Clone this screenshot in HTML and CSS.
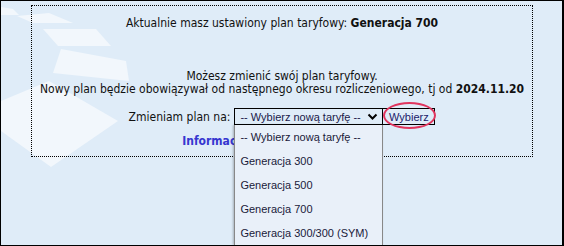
FILE: index.html
```html
<!DOCTYPE html>
<html lang="pl">
<head>
<meta charset="utf-8">
<link rel="stylesheet" href="styles.css">
</head>
<body>
<div class="frame">
  <svg class="deco" width="140" height="180" viewBox="0 0 140 180">
    <polygon points="0,6 12,8 18,14 0,14" fill="#f2f7fc"/>
    <polygon points="16,15 48,12 72,22 32,22" fill="#f2f7fc"/>
    <polygon points="42,28 95,28 110,45 57,45" fill="#f2f7fc"/>
    <polygon points="60,48 125,60 128,80 52,72" fill="#f2f7fc"/>
    <polygon points="0,100 48,80 117,120 50,166 0,130" fill="#f2f7fc"/>
  </svg>
  <div class="box">
    <p class="current">Aktualnie masz ustawiony plan taryfowy: <b>Generacja 700</b></p>
    <p class="info">Możesz zmienić swój plan taryfowy.<br>Nowy plan będzie obowiązywał od następnego okresu rozliczeniowego, tj od <b>2024.11.20</b></p>
    <div class="form-row">
      <span class="label">Zmieniam plan na:</span>
      <div class="select-wrap">
        <div class="select">
          <span>-- Wybierz nową taryfę --</span>
          <svg class="chev" width="11" height="8" viewBox="0 0 11 8"><path d="M1.5 1.5 L5.5 5.5 L9.5 1.5" fill="none" stroke="#000" stroke-width="2"/></svg>
        </div>
        <ul class="dropdown">
          <li>-- Wybierz nową taryfę --</li>
          <li>Generacja 300</li>
          <li>Generacja 500</li>
          <li>Generacja 700</li>
          <li>Generacja 300/300 (SYM)</li>
        </ul>
      </div>
      <div class="btn-wrap">
        <button class="btn">Wybierz</button>
        <span class="ring"></span>
      </div>
    </div>
    <a class="link" href="#">Informacje o planach taryfowych</a>
  </div>
</div>
</body>
</html>
```
FILE: styles.css
```css
html, body { margin: 0; padding: 0; }
body { background: #fff; }
.frame {
  position: relative;
  width: 564px;
  height: 246px;
  box-sizing: border-box;
  border: 1px solid #000;
  border-right-width: 2px;
  background: #dfecf8;
  overflow: hidden;
  padding: 4px 0 0 30px;
  font-family: "DejaVu Sans Condensed", "DejaVu Sans", sans-serif;
  font-size: 12px;
  color: #111;
}
.deco { position: absolute; left: 0; top: 0; }
.box {
  position: relative;
  width: 502px;
  height: 152px;
  box-sizing: border-box;
  border: 1px dotted #000;
  text-align: center;
  padding-top: 11px;
}
.box p { margin: 0; line-height: 13px; }
.current { margin-bottom: 40px !important; }
.form-row {
  display: flex;
  justify-content: center;
  align-items: center;
  margin-top: 12px;
  height: 17px;
}
.label { margin-right: 4px; }
.select-wrap { position: relative; }
.select {
  width: 149px;
  height: 17px;
  box-sizing: border-box;
  border: 1px solid #000;
  display: flex;
  align-items: center;
  justify-content: space-between;
  padding: 0 4px 0 5px;
  font-family: "Liberation Sans", Arial, sans-serif;
  font-size: 11px;
  color: #1a1a4a;
  background: #dfecf8;
}
.chev { display: block; }
.dropdown {
  position: absolute;
  left: 0;
  top: 17px;
  width: 149px;
  margin: 0;
  padding: 0;
  list-style: none;
  background: #e9f0f9;
  border-left: 1px solid #888;
  border-right: 1px solid #888;
  box-sizing: border-box;
  box-shadow: -1px 0 2px rgba(0,0,0,0.25);
  text-align: left;
  font-family: "Liberation Sans", Arial, sans-serif;
  font-size: 11px;
  color: #1a1a3a;
  z-index: 2;
}
.dropdown li { height: 24px; line-height: 24px; padding-left: 5px; }
.btn-wrap { position: relative; }
.btn {
  display: block;
  height: 17px;
  width: 52px;
  margin: 0;
  padding: 0;
  border: 1px solid #000;
  border-left: 0;
  background: #dfecf8;
  font-family: "Liberation Sans", Arial, sans-serif;
  font-size: 11px;
  color: #1a1a6a;
}
.ring {
  position: absolute;
  left: 0;
  top: -6px;
  width: 53px;
  height: 27px;
  box-sizing: border-box;
  border: 2px solid #e0355e;
  border-radius: 50%;
}
.link {
  display: block;
  margin-top: 10px;
  font-size: 12px;
  line-height: 13px;
  font-weight: bold;
  color: #3636d0;
  text-decoration: none;
}
```
